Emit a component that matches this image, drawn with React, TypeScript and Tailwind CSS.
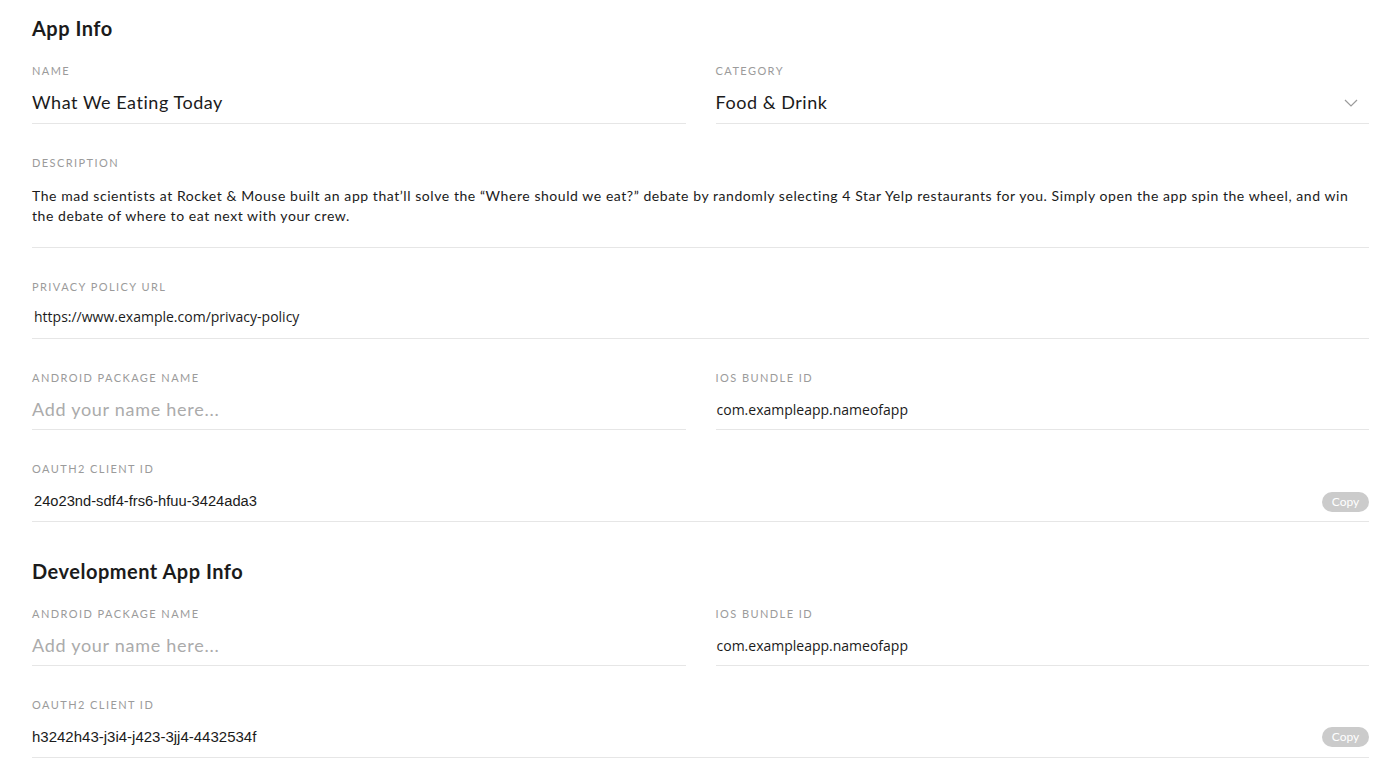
const avenir = "font-['Lato','Noto_Sans',sans-serif]";
const segoe = "font-['Open_Sans','Noto_Sans',sans-serif]";
const arial = "font-['Liberation_Sans','Arial',sans-serif]";

const Label = ({ children }: { children: React.ReactNode }) => (
  <div className={`${avenir} text-[11px] leading-[14px] tracking-[0.13em] text-[#9b9b9b] uppercase`}>
    {children}
  </div>
);

type FieldProps = {
  label: string;
  children: React.ReactNode;
  rowClass?: string;
};

const Field = ({ label, children, rowClass = 'h-[45px] pt-[4px]' }: FieldProps) => (
  <div className="flex min-w-0 flex-1 flex-col">
    <Label>{label}</Label>
    <div className={`flex items-center border-b border-[#e6e6e6] ${rowClass}`}>{children}</div>
  </div>
);

const CopyButton = () => (
  <button
    type="button"
    className={`${avenir} ml-auto h-[20px] w-[47px] rounded-full bg-[#cbcbcb] text-[12px] text-white`}
  >
    Copy
  </button>
);

const Heading = ({ children }: { children: React.ReactNode }) => (
  <h2 className={`${avenir} text-[20px] leading-[28px] font-bold tracking-[0.025em] text-[#1b1b1b]`}>{children}</h2>
);

export default function App() {
  return (
    <div className="min-h-screen bg-white px-[32px] pt-[14px] pr-[31px] text-[#1b1b1b]">
      <Heading>App Info</Heading>

      <div className="mt-[22px] flex flex-col gap-[32px]">
        <div className="flex gap-[30px]">
          <Field label="Name" rowClass="h-[46px] pt-[4px]">
            <span className={`${avenir} text-[18px] tracking-[0.03em]`}>What We Eating Today</span>
          </Field>
          <Field label="Category" rowClass="h-[46px] pt-[4px]">
            <span className={`${avenir} text-[18px] tracking-[0.03em]`}>Food &amp; Drink</span>
            <svg
              className="mr-[11px] ml-auto"
              width="14"
              height="8"
              viewBox="0 0 14 8"
              fill="none"
              stroke="#9b9b9b"
              strokeWidth="1.2"
            >
              <path d="M1 1l6 6 6-6" />
            </svg>
          </Field>
        </div>

        <Field label="Description" rowClass="pt-[16px] pb-[21px]">
          <p className={`${avenir} text-[14px] leading-[20px] tracking-[0.04em]`}>
            The mad scientists at Rocket &amp; Mouse built an app that’ll solve the “Where should we eat?” debate by
            randomly selecting 4 Star Yelp restaurants for you. Simply open the app spin the wheel, and win the debate
            of where to eat next with your crew.
          </p>
        </Field>

        <Field label="Privacy Policy URL" rowClass="h-[45px]">
          <span className={`${segoe} pl-[2px] text-[14px]`}>https://www.example.com/privacy-policy</span>
        </Field>

        <div className="flex gap-[30px]">
          <Field label="Android Package Name">
            <span className={`${avenir} text-[18px] tracking-[0.04em] text-[#ababab]`}>Add your name here...</span>
          </Field>
          <Field label="iOS Bundle ID">
            <span className={`${segoe} pl-[1px] text-[14px]`}>com.exampleapp.nameofapp</span>
          </Field>
        </div>

        <Field label="OAuth2 Client ID" rowClass="h-[46px] pt-[6px]">
          <span className={`${arial} pl-[2px] text-[14.7px]`}>24o23nd-sdf4-frs6-hfuu-3424ada3</span>
          <CopyButton />
        </Field>
      </div>

      <div className="mt-[35px]">
        <Heading>Development App Info</Heading>
      </div>

      <div className="mt-[22px] flex flex-col gap-[32px] pb-[20px]">
        <div className="flex gap-[30px]">
          <Field label="Android Package Name">
            <span className={`${avenir} text-[18px] tracking-[0.04em] text-[#ababab]`}>Add your name here...</span>
          </Field>
          <Field label="iOS Bundle ID">
            <span className={`${segoe} pl-[1px] text-[14px]`}>com.exampleapp.nameofapp</span>
          </Field>
        </div>

        <Field label="OAuth2 Client ID" rowClass="h-[46px] pt-[5px]">
          <span className={`${arial} text-[15px]`}>h3242h43-j3i4-j423-3jj4-4432534f</span>
          <CopyButton />
        </Field>
      </div>
    </div>
  );
}
